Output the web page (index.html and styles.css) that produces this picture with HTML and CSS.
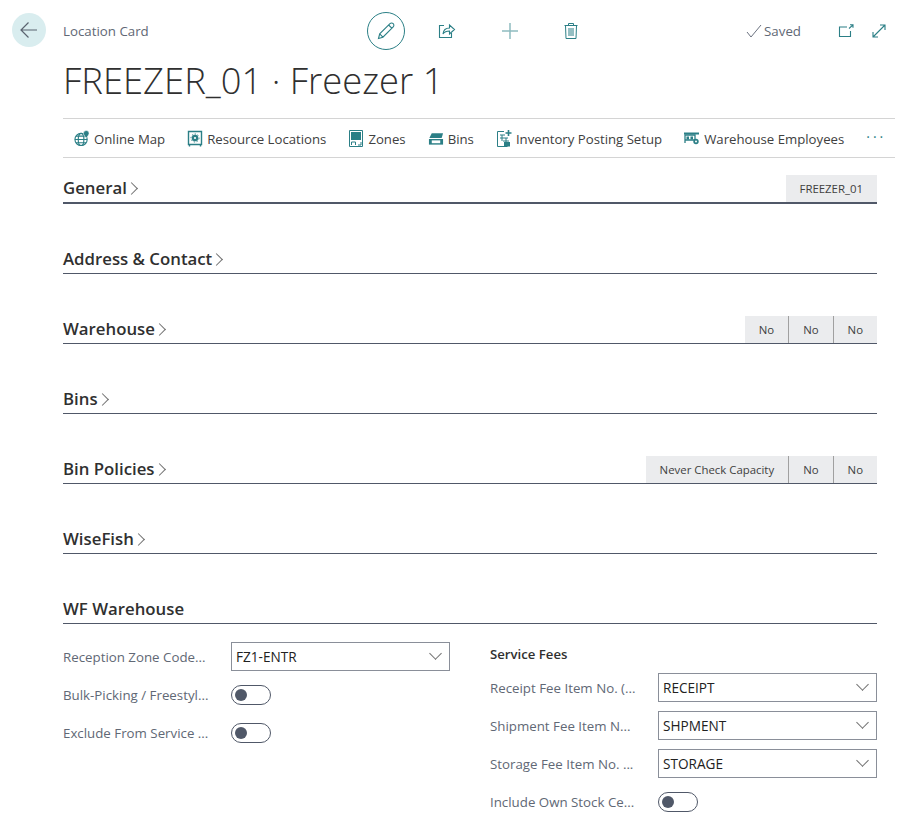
FILE: index.html
```html
<!DOCTYPE html>
<html lang="en">
<head>
    <meta charset="UTF-8">
    <title>Location Card</title>
    <link rel="stylesheet" href="styles.css">
</head>
<body>
    <div class="page">
        <div class="back-col">
            <button class="back-button">
                <svg width="20" height="20" viewBox="0 0 20 20" fill="none" stroke="#5b6470" stroke-width="1.2"><path d="M18 10H2M9.500 2.500 2 10l7.500 7.500"/></svg>
            </button>
        </div>

        <div class="main">
            <header class="top-bar">
                <span class="caption">Location Card</span>
                <div class="actions">
                    <button class="edit-button">
                        <svg width="20" height="20" viewBox="0 0 20 20" fill="none" stroke="#2b7f86" stroke-width="1.1"><path d="M2.500 17.500l1.200-4.600L14 2.600a1.900 1.900 0 0 1 3.200 3.200L6.900 16.200zM3.700 12.900l3.200 3.300M12.600 4l3.200 3.200"/></svg>
                    </button>
                    <svg class="action-icon" width="18" height="18" viewBox="0 0 18 18" fill="none" stroke="#2b7f86" stroke-width="1.1"><path d="M6 3.500H1.500v12h12V11"/><path d="M5 12c.4-4 3-6 6.500-6V3l5 4.500-5 4.500V9c-2.500 0-5 .7-6.500 3z"/></svg>
                    <svg class="action-icon" width="18" height="18" viewBox="0 0 18 18" stroke="#8fbcc0" stroke-width="1.5"><path d="M9 1v16M1 9h16"/></svg>
                    <svg class="action-icon action-icon-last" width="18" height="18" viewBox="0 0 18 18" fill="none" stroke="#2b7f86" stroke-width="1"><path d="M2.500 3.500h13M6.500 3.500V1.500h5v2M3.500 3.500l.5 13h10l.5-13M7 6v8M9 6v8M11 6v8"/></svg>
                </div>
                <div class="status">
                    <svg width="16" height="14" viewBox="0 0 16 14" fill="none" stroke="#6b7280" stroke-width="1"><path d="M1 8l4 5L15 1"/></svg>
                    <span>Saved</span>
                    <svg class="open-icon" width="16" height="14" viewBox="0 0 16 14" fill="none" stroke="#2b7f86" stroke-width="1.1"><path d="M9 3H1.500v9.500h11V7M11 4.500 15 .8M12 .8h3v3"/></svg>
                    <svg width="16" height="16" viewBox="0 0 16 16" fill="none" stroke="#2b7f86" stroke-width="1.1"><path d="M2 14 14 2M9 2h5v5M2 9v5h5"/></svg>
                </div>
            </header>

            <h1 class="title">FREEZER_01 · Freezer 1</h1>

            <nav class="menu">
                <a class="menu-item">
                    <svg viewBox="0 0 17 17" fill="none" stroke="#2b7f86" stroke-width="1.200"><circle cx="7.500" cy="9.500" r="6.500"/><ellipse cx="7.500" cy="9.500" rx="3" ry="6.500"/><path d="M1 9.500h13M2 6h11M2 13h11"/><path d="M13 0a3 3 0 0 1 3 3c0 2-3 5-3 5s-3-3-3-5a3 3 0 0 1 3-3z" fill="#2b7f86" stroke="#fff" stroke-width=".6"/></svg>
                    Online Map
                </a>
                <a class="menu-item">
                    <svg viewBox="0 0 16 17" fill="none" stroke="#2b7f86" stroke-width="1.400"><path d="M1.500 1.500h13v13h-13zM2.500 14.500v2M13.500 14.500v2"/><circle cx="8" cy="8" r="3.200" fill="#2b7f86" stroke="none"/><circle cx="8" cy="8" r="1.100" fill="#fff" stroke="none"/><circle cx="8" cy="8" r="4" stroke-dasharray="1.500 1.500" stroke-width="1"/></svg>
                    Resource Locations
                </a>
                <a class="menu-item">
                    <svg viewBox="0 0 16 17" fill="none" stroke="#2b7f86"><path d="M1.500 .5h13v16h-13z"/><path d="M3 2h10v8H3z" fill="#2b7f86" stroke="none"/><path d="M3.500 15v-3h4v3M10 15h3v-3" stroke-width="1"/></svg>
                    Zones
                </a>
                <a class="menu-item">
                    <svg viewBox="0 0 17 17" fill="none" stroke="#2b7f86"><path d="M4 3h12l-1.500 5H1.500z" fill="#2b7f86" stroke="none"/><path d="M1 9h15v6H1z" fill="#2b7f86" stroke="none"/><path d="M4 10.500h9v3H4z" fill="#fff" stroke="none"/></svg>
                    Bins
                </a>
                <a class="menu-item">
                    <svg viewBox="0 0 16 17" fill="none" stroke="#2b7f86"><path d="M8 1.500H1.500v15h10"/><path d="M4 5h5M4 8h8M7 11h6M6 5v6M10 8v4"/><path d="M12.500 0v6M9.500 3h6" stroke-width="1.600"/><path d="M8 12h6v4.500H8z" fill="#2b7f86" stroke="none"/></svg>
                    Inventory Posting Setup
                </a>
                <a class="menu-item">
                    <svg viewBox="0 0 16 16" fill="none" stroke="#2b7f86"><path d="M0 2h15v2H0z" fill="#2b7f86" stroke="none"/><path d="M1 4.500h10v5H1zM1 4.500v8" stroke-width="1.300"/><path d="M2.500 6h2.500v3H2.500zM6.500 6H9v3H6.500z" fill="#2b7f86" stroke="none"/><circle cx="12" cy="11" r="2.700" fill="#2b7f86" stroke="none"/><circle cx="12" cy="11" r="1" fill="#fff" stroke="none"/></svg>
                    Warehouse Employees
                </a>
                <span class="more">···</span>
            </nav>

            <section class="group">
                <div class="group-head group-head-first">
                    <h2>General<i class="chevron"></i></h2>
                    <div class="summary"><span>FREEZER_01</span></div>
                </div>
            </section>

            <section class="group">
                <div class="group-head"><h2>Address &amp; Contact<i class="chevron"></i></h2></div>
            </section>

            <section class="group">
                <div class="group-head">
                    <h2>Warehouse<i class="chevron"></i></h2>
                    <div class="summary"><span>No</span><span>No</span><span>No</span></div>
                </div>
            </section>

            <section class="group">
                <div class="group-head"><h2>Bins<i class="chevron"></i></h2></div>
            </section>

            <section class="group">
                <div class="group-head">
                    <h2>Bin Policies<i class="chevron"></i></h2>
                    <div class="summary"><span>Never Check Capacity</span><span>No</span><span>No</span></div>
                </div>
            </section>

            <section class="group">
                <div class="group-head"><h2>WiseFish<i class="chevron"></i></h2></div>
            </section>

            <section class="group">
                <div class="group-head"><h2>WF Warehouse</h2></div>
                <div class="fields">
                    <div class="field-col field-col-left">
                        <div class="field">
                            <label>Reception Zone Code...</label>
                            <div class="select">FZ1-ENTR<i class="select-arrow"></i></div>
                        </div>
                        <div class="field">
                            <label>Bulk-Picking / Freestyl...</label>
                            <div class="toggle"></div>
                        </div>
                        <div class="field">
                            <label>Exclude From Service ...</label>
                            <div class="toggle"></div>
                        </div>
                    </div>
                    <div class="field-col">
                        <h3>Service Fees</h3>
                        <div class="field">
                            <label>Receipt Fee Item No. (...</label>
                            <div class="select">RECEIPT<i class="select-arrow"></i></div>
                        </div>
                        <div class="field">
                            <label>Shipment Fee Item N...</label>
                            <div class="select">SHPMENT<i class="select-arrow"></i></div>
                        </div>
                        <div class="field">
                            <label>Storage Fee Item No. ...</label>
                            <div class="select">STORAGE<i class="select-arrow"></i></div>
                        </div>
                        <div class="field">
                            <label>Include Own Stock Ce...</label>
                            <div class="toggle"></div>
                        </div>
                    </div>
                </div>
            </section>
        </div>
    </div>
</body>
</html>
```

FILE: styles.css
```css
html, body {
    height: 822px;
    overflow: hidden;
}

body {
    margin: 0;
    font-family: 'Open Sans', sans-serif;
    background-color: #fff;
    color: #212121;
}

.page {
    display: flex;
}

.back-col {
    width: 63px;
    padding: 13px 0 0 12px;
    box-sizing: border-box;
}

.back-button {
    width: 34px;
    height: 34px;
    padding: 0;
    border: none;
    border-radius: 50%;
    background-color: #d9edef;
    display: flex;
    align-items: center;
    justify-content: center;
}

.main {
    width: 814px;
}

.top-bar {
    width: 824px;
    height: 62px;
    display: flex;
    align-items: center;
}

.caption {
    width: 304px;
    font-size: 13.3px;
    color: #616875;
}

.actions {
    display: flex;
    align-items: center;
}

.edit-button {
    width: 38px;
    height: 38px;
    padding: 0;
    border: 1px solid #2b7f86;
    border-radius: 50%;
    background: #fff;
    display: flex;
    align-items: center;
    justify-content: center;
}

.action-icon {
    margin-left: 45px;
}

.edit-button + .action-icon {
    margin-left: 33px;
}

.action-icon-last {
    margin-left: 43px;
}

.status {
    margin-left: auto;
    display: flex;
    align-items: center;
    font-size: 13.3px;
    color: #616875;
    gap: 2px;
}

.open-icon {
    margin: 0 15px 0 35px;
}

.title {
    margin: 0;
    height: 56px;
    font-size: 36.4px;
    font-weight: 300;
    line-height: 36px;
    color: #303030;
}

.menu {
    width: 832px;
    height: 40px;
    box-sizing: border-box;
    border-top: 1px solid #d4d4d4;
    border-bottom: 1px solid #d4d4d4;
    display: flex;
    align-items: center;
    padding: 1px 0 0 11px;
    font-size: 13.2px;
    color: #404040;
}

.menu-item {
    display: flex;
    align-items: center;
    gap: 4px;
    margin-right: 22px;
    white-space: nowrap;
}

.menu-item svg {
    width: 16px;
    height: 17px;
    flex-shrink: 0;
}

.more {
    color: #2b7f86;
    letter-spacing: 3px;
    font-size: 14px;
    line-height: 16px;
    margin-top: -3px;
}

.group-head {
    height: 70px;
    box-sizing: border-box;
    border-bottom: 1px solid #505868;
    display: flex;
    align-items: flex-end;
    justify-content: space-between;
}

.group-head-first {
    height: 46px;
    border-bottom-width: 2px;
}

.group-head h2 {
    margin: 0 0 3px;
    font-size: 16.8px;
    font-weight: 600;
    line-height: 22px;
    color: #303030;
    display: flex;
    align-items: center;
}

.chevron {
    width: 8px;
    height: 8px;
    border-top: 1px solid #707070;
    border-right: 1px solid #707070;
    transform: rotate(45deg);
}

.summary {
    display: flex;
    height: 27px;
}

.summary span {
    display: flex;
    align-items: center;
    padding: 0 14px;
    background-color: #ebecee;
    font-size: 11.4px;
    color: #404040;
    border-left: 1px solid #a0a0a0;
}

.summary span:first-child {
    border-left: none;
}

.fields {
    display: flex;
    padding-top: 14px;
}

.field-col-left {
    width: 427px;
}

.field {
    height: 38px;
    display: flex;
    align-items: center;
}

.field label {
    width: 168px;
    font-size: 13.3px;
    color: #616875;
    white-space: nowrap;
}

.field-col h3 {
    margin: 8px 0 7px;
    font-size: 13.2px;
    font-weight: 600;
    line-height: 16px;
    color: #303030;
}

.select {
    width: 219px;
    height: 29px;
    margin-bottom: 1px;
    box-sizing: border-box;
    border: 1px solid #8a8f99;
    padding: 0 4px;
    font-size: 13.6px;
    line-height: 27px;
    color: #212121;
    position: relative;
}

.select-arrow {
    position: absolute;
    right: 9px;
    top: 6px;
    width: 8px;
    height: 8px;
    border-right: 1px solid #707070;
    border-bottom: 1px solid #707070;
    transform: rotate(45deg);
}

.toggle {
    width: 40px;
    height: 20px;
    box-sizing: border-box;
    border: 1px solid #505868;
    border-radius: 10px;
    padding: 3px 0 0 3px;
}

.toggle::before {
    content: "";
    display: block;
    width: 12px;
    height: 12px;
    border-radius: 50%;
    background-color: #505868;
}
```
